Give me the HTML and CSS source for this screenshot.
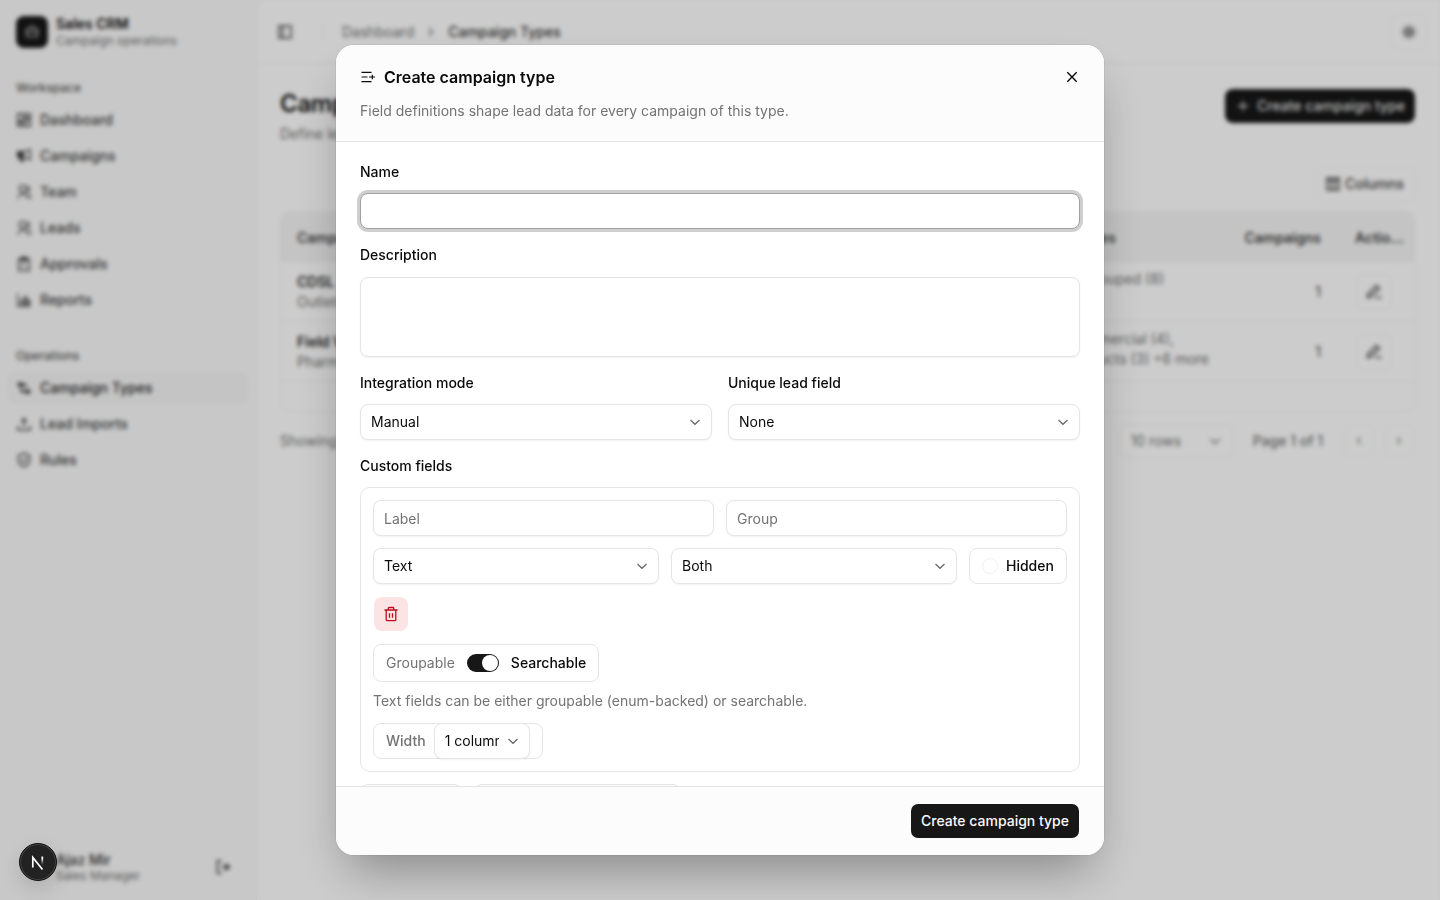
FILE: index.html
```html
<!DOCTYPE html>
<html lang="en">
<head>
<meta charset="utf-8">
<title>Campaign Types</title>
<link rel="stylesheet" href="styles.css">
</head>
<body>
<svg class="defs" width="0" height="0">
  <symbol id="down" viewBox="0 0 16 16"><path d="M3.500 6L8 10.300 12.500 6" fill="none" stroke="currentColor" stroke-width="1.200"/></symbol>
  <symbol id="user" viewBox="0 0 24 24"><path d="M2 22a8 8 0 1 1 16 0h-2a6 6 0 0 0-12 0zm8-9a6 6 0 1 1 0-12 6 6 0 0 1 0 12zm0-2a4 4 0 1 0 0-8 4 4 0 0 0 0 8zm8.3 3.7A8 8 0 0 1 23 22h-2a6 6 0 0 0-3.5-5.5zM17.6 2.4a5.5 5.5 0 0 1-2.1 10.600v-2a3.500 3.500 0 0 0 1.200-6.700z"/></symbol>
  <symbol id="pencil" viewBox="0 0 16 16"><path d="M1.500 13.500l.8-3.500 8.200-8.300 2.800 2.800-8.300 8.300zM9.500 13.500h6" fill="none" stroke="currentColor" stroke-width="1.700"/></symbol>
</svg>
<div class="app">
  <aside class="sidebar">
    <div class="brand">
      <span class="logo"><svg viewBox="0 0 16 16"><path d="M5 5a3 3 0 0 1 6 0M2 5.500h12l-1 7.500H3zM2.500 9h11" fill="none" stroke="currentColor" stroke-width="1.200"/></svg></span>
      <div><div class="brand-name">Sales CRM</div><div class="brand-sub">Campaign operations</div></div>
    </div>
    <div class="nav-label">Workspace</div>
    <nav>
      <a><svg viewBox="0 0 16 16"><path d="M1.700 1.700h5v7h-5zM9.300 1.700h5v4h-5zM9.300 7.700h5v6.600h-5zM1.700 10.700h5v3.600h-5z" fill="none" stroke="currentColor" stroke-width="1.400"/></svg>Dashboard</a>
      <a><svg viewBox="0 0 16 16"><path d="M1 3h7v7H7l1 4H4.500L3.300 10H1z"/><path d="M8 3.700q3 0 6-2v10q-3-2-6-2" fill="none" stroke="currentColor" stroke-width="1.400"/></svg>Campaigns</a>
      <a><svg><use href="#user"/></svg>Team</a>
      <a><svg><use href="#user"/></svg>Leads</a>
      <a><svg viewBox="0 0 16 16"><path d="M2.700 3h10.600v11.500H2.700zM5.500 1.500h5v3h-5zM5.500 9h4" fill="none" stroke="currentColor" stroke-width="1.400"/></svg>Approvals</a>
      <a><svg viewBox="0 0 16 16"><path d="M1.700 1.500v12.800h13M4.700 8v4.500h2V8zM8.500 4.500v8h2v-8zM12 8v4.500h1.500V8z" fill="none" stroke="currentColor" stroke-width="1.200"/></svg>Reports</a>
    </nav>
    <div class="nav-label second">Operations</div>
    <nav>
      <a class="active"><svg viewBox="0 0 16 16"><path d="M1 4.500L5 1v2.800h5.500v2.500H5V8zM15 11.500L11 15v-2.500H7q-3 0-3-3.500h2q0 1.500 1.500 1.500H11V8z"/></svg>Campaign Types</a>
      <a><svg viewBox="0 0 16 16"><path d="M1.700 10v3.700h12.600V10M8 10.500V4" fill="none" stroke="currentColor" stroke-width="1.400"/><path d="M4.500 5.500L8 1.500l3.500 4z"/></svg>Lead Imports</a>
      <a><svg viewBox="0 0 16 16"><path d="M8 1.500l5.500 2v6q0 3-5.500 5.300Q2.500 12.500 2.500 9.500v-6zM5.300 7.700L7.500 10 11 6.300" fill="none" stroke="currentColor" stroke-width="1.400"/></svg>Rules</a>
    </nav>
    <div class="account">
      <div><div class="acc-name">Ajaz Mir</div><div class="acc-role">Sales Manager</div></div>
      <svg viewBox="0 0 16 16"><path d="M6.500 1.700h-4v12.600h4M6.500 8h6" fill="none" stroke="currentColor" stroke-width="1.500"/><path d="M10.500 4l5 4-5 4z"/></svg>
    </div>
  </aside>
  <main class="main">
    <header class="topbar">
      <svg class="panel-icon" viewBox="0 0 16 16"><path d="M2 2h12v12H2zM5.700 2v12" fill="none" stroke="currentColor" stroke-width="1.500"/></svg>
      <span class="divider"></span>
      <span class="crumb">Dashboard</span>
      <svg class="crumb-sep" viewBox="0 0 24 24"><path d="M13.170 12L8.220 7.050l1.410-1.410L16 12l-6.370 6.360-1.410-1.410z"/></svg>
      <span class="crumb here">Campaign Types</span>
      <span class="theme"><svg viewBox="0 0 24 24"><path d="M12 6a6 6 0 1 1 0 12 6 6 0 0 1 0-12zm0 3a3 3 0 1 0 0 6 3 3 0 0 0 0-6z"/><path d="M11 1h2v4h-2zM11 19h2v4h-2zM1 11h4v2H1zM19 11h4v2h-4zM3.500 5L5 3.500 7.500 6 6 7.500zM16.500 18l1.500-1.500 2.500 2.500-1.500 1.500zM19 3.500L20.500 5 18 7.500 16.500 6zM6 16.500L7.500 18 5 20.500 3.500 19z"/></svg></span>
    </header>
    <section class="content">
      <div class="page-head">
        <div><h1>Campaign Types</h1><p>Define lead data</p></div>
        <span class="primary"><svg viewBox="0 0 24 24"><path d="M11 11V4h2v7h7v2h-7v7h-2v-7H4v-2z"/></svg>Create campaign type</span>
      </div>
      <div class="tools"><span class="columns"><svg viewBox="0 0 16 16"><path d="M2 2h12v12H2zM2 4.500h12M6 4v10M10 4v10" fill="none" stroke="currentColor" stroke-width="1.400"/></svg>Columns</span></div>
      <div class="table">
        <div class="row head"><span>Campaign</span><span class="attr h">Attributes</span><span class="num">Campaigns</span><span class="act">Actio...</span></div>
        <div class="row"><div><b>CDSL</b><p>Outlets</p></div><div class="attr a">Ungrouped (8)<br>&nbsp;</div><span class="num">1</span><span class="act"><i class="edit"><svg><use href="#pencil"/></svg></i></span></div>
        <div class="row"><div><b>Field Visit</b><p>Pharma</p></div><div class="attr b"><span class="in">Commercial (4),</span><br>Products (3) +6 more</div><span class="num">1</span><span class="act"><i class="edit"><svg><use href="#pencil"/></svg></i></span></div>
        <div class="filler"></div>
      </div>
      <div class="pager">
        <span>Showing</span>
        <span class="rows">10 rows<svg><use href="#down"/></svg></span>
        <span class="page">Page 1 of 1</span>
        <span class="step">‹</span><span class="step">›</span>
      </div>
    </section>
  </main>
</div>
<div class="overlay">
  <div class="modal" role="dialog">
    <header class="modal-head">
      <div class="title-row">
        <svg class="title-icon" viewBox="0 0 16 16"><path d="M1.500 3.300h10M1.500 8h6M1.500 12.700h10M9 8h6M12.300 5.700v4.600"/></svg>
        <h2>Create campaign type</h2>
        <svg class="close" viewBox="0 0 16 16"><path d="M3.300 3.300l9.400 9.400M12.700 3.300l-9.400 9.400"/></svg>
      </div>
      <p>Field definitions shape lead data for every campaign of this type.</p>
    </header>
    <div class="modal-body">
      <div class="field"><label>Name</label><div class="control focus"></div></div>
      <div class="field desc"><label>Description</label><div class="control area"></div></div>
      <div class="pair">
        <div class="field"><label>Integration mode</label><div class="control">Manual<svg><use href="#down"/></svg></div></div>
        <div class="field"><label>Unique lead field</label><div class="control">None<svg><use href="#down"/></svg></div></div>
      </div>
      <div class="field">
        <label>Custom fields</label>
        <div class="card">
          <div class="two"><div class="control hint">Label</div><div class="control hint">Group</div></div>
          <div class="three">
            <div class="control">Text<svg><use href="#down"/></svg></div>
            <div class="control">Both<svg><use href="#down"/></svg></div>
            <div class="pill hidden-opt"><span class="dot"></span>Hidden</div>
          </div>
          <span class="delete"><svg viewBox="0 0 16 16"><path d="M1.500 4h13M3.200 4v9.700q0 1 1 1h7.600q1 0 1-1V4M5.300 4V2.300q0-.8.8-.8h3.800q.8 0 .8.8V4M6.500 7.200v4.600M9.500 7.200v4.600"/></svg></span>
          <div class="pill mode"><span class="muted">Groupable</span><span class="switch"></span><span>Searchable</span></div>
          <p class="note">Text fields can be either groupable (enum-backed) or searchable.</p>
          <div class="pill width"><span>Width</span><div class="control"><span class="clip">1 column</span><svg><use href="#down"/></svg></div></div>
        </div>
      </div>
      <div class="more"><span class="ghost g1"></span><span class="ghost g2"></span></div>
    </div>
    <footer class="modal-foot"><button>Create campaign type</button></footer>
  </div>
</div>
<div class="badge"><svg viewBox="0 0 36 36"><defs><linearGradient id="fade" gradientUnits="userSpaceOnUse" x1="0" y1="12" x2="0" y2="20"><stop offset=".3" stop-color="#fff"/><stop offset="1" stop-color="#fff" stop-opacity=".1"/></linearGradient></defs><path d="M12.800 23.500V13.500L22.500 25.500"/><path d="M22.300 12.500v8" stroke="url(#fade)"/></svg></div>
</body>
</html>
```

FILE: styles.css
```css
* { box-sizing: border-box; }
body { margin: 0; width: 1440px; height: 900px; overflow: hidden; font: 14px/20px Inter, sans-serif; color: #0a0a0a; background: #fafafa; }
h1, h2, p { margin: 0; }
svg { fill: currentColor; flex: none; width: 16px; height: 16px; }
.defs { position: absolute; }

.app { display: flex; height: 900px; }
.sidebar { width: 256px; padding: 16px 8px 0; display: flex; flex-direction: column; background: #fafafa; }
.brand { display: flex; gap: 8px; padding-left: 8px; height: 32px; }
.logo { width: 32px; height: 32px; border-radius: 8px; background: #171717; color: #ccc; display: grid; place-items: center; }
.brand-name { font-weight: 600; line-height: 16px; }
.brand-sub { font-size: 12px; line-height: 18px; color: #737373; }
.nav-label { margin-top: 24px; padding-left: 8px; height: 32px; font-size: 12px; line-height: 32px; font-weight: 500; color: #555; }
.nav-label.second { margin-top: 24px; }
nav { display: flex; flex-direction: column; gap: 4px; }
nav a { display: flex; align-items: center; gap: 8px; height: 32px; padding-left: 8px; border-radius: 8px; font-weight: 500; color: #404040; }
nav a.active { background: #f6f6f6; width: 240px; color: #262626; }
.account { margin-top: auto; height: 50px; margin-bottom: 8px; padding: 0 17px 0 48px; display: flex; justify-content: space-between; align-items: center; color: #333; }
.account > div { padding-top: 2px; }
.acc-name { font-weight: 500; line-height: 16px; }
.acc-role { font-size: 12px; line-height: 16px; color: #737373; }

.main { flex: 1; margin: 1px 1px 0 0; background: #fff; border-left: 1px solid #f3f3f3; border-radius: 8px 0 0 0; }
.topbar { height: 63px; display: flex; align-items: center; padding: 0 12px 0 20px; border-bottom: 1px solid #f3f3f3; }
.panel-icon { color: #404040; }
.divider { width: 1px; height: 16px; margin: 0 18px 0 30px; background: #f3f3f3; }
.crumb { color: #737373; }
.crumb-sep { margin: 0 9px; color: #737373; }
.crumb.here { color: #333; font-weight: 500; }
.theme { width: 36px; height: 36px; margin-left: auto; border: 1px solid #f6f6f6; border-radius: 8px; display: grid; place-items: center; color: #444; }
.content { padding: 24px 24px 0 23px; }
.page-head { display: flex; justify-content: space-between; height: 62px; }
.page-head h1 { font-size: 24px; line-height: 31px; font-weight: 600; letter-spacing: -.3px; }
.page-head p { margin-top: 5px; color: #737373; }
.primary { display: flex; align-items: center; gap: 6px; width: 190px; height: 34px; margin-top: 1px; padding-left: 10px; border-radius: 8px; background: #171717; color: #e8e8e8; font-weight: 500; }
.tools { display: flex; justify-content: flex-end; margin-top: 16px; }
.columns { display: flex; align-items: center; gap: 4px; width: 100px; height: 36px; padding-left: 9px; border: 1px solid #f8f8f8; border-radius: 8px; font-weight: 500; color: #404040; }
.table { margin-top: 9px; border: 1px solid #f4f4f4; border-radius: 10px; overflow: hidden; color: #444; }
.row { display: grid; grid-template-columns: 700px 1fr 111px 93px; height: 60px; align-items: center; padding-left: 16px; border-bottom: 1px solid #f3f3f3; }
.row.head { height: 50px; padding-top: 3px; background: #f5f5f5; font-weight: 600; }
.row b { font-weight: 600; color: #262626; }
.row p { color: #737373; }
.attr { text-align: right; color: #737373; white-space: nowrap; padding-bottom: 5px; }
.attr.h { padding: 0 94px 0 0; color: #444; }
.attr.a { padding-right: 46px; }
.attr.b { padding-right: 1px; }
.in { margin-right: 35px; }
.num { text-align: right; }
.act { padding-left: 34px; white-space: nowrap; }
.edit { display: grid; place-items: center; width: 36px; height: 36px; margin-left: 1px; border: 1px solid #f4f4f4; border-radius: 8px; }
.filler { height: 29px; }
.pager { display: flex; align-items: center; margin-top: 11px; height: 36px; color: #737373; }
.rows { margin-left: auto; width: 114px; height: 34px; padding: 0 9px 0 11px; border: 1px solid #f4f4f4; border-radius: 8px; display: flex; align-items: center; justify-content: space-between; }
.page { margin: 0 20px; font-weight: 500; }
.step { width: 32px; height: 32px; margin-left: 0; border: 1px solid #fafafa; border-radius: 8px; text-align: center; line-height: 28px; }
.step + .step { margin-left: 8px; }

.overlay { position: fixed; inset: 0; display: grid; place-items: center; background: rgba(0,0,0,.2); backdrop-filter: blur(2px); }
.modal { width: 768px; height: 810px; display: flex; flex-direction: column; border-radius: 18px; overflow: hidden; background: #fff; box-shadow: 0 0 0 1px rgba(0,0,0,.05), 0 25px 50px -12px rgba(0,0,0,.35); }
.modal-head { height: 97px; padding: 20px 24px 0; background: #fcfcfc; border-bottom: 1px solid #e5e5e5; }
.title-row { display: flex; align-items: center; gap: 8px; height: 24px; }
.title-row h2 { font-size: 16px; line-height: 24px; font-weight: 600; }
.title-icon { fill: none; stroke: currentColor; stroke-width: 1.2; }
.close { margin-left: auto; fill: none; stroke: currentColor; stroke-width: 1.4; }
.modal-head p { margin-top: 12px; line-height: 20px; color: #737373; }
.modal-body { flex: 1; min-height: 0; overflow: hidden; padding: 20px 24px 0; display: flex; flex-direction: column; gap: 16px; }
.field { display: flex; flex-direction: column; gap: 11px; flex: none; }
.field.desc { gap: 12px; }
label { height: 20px; font-weight: 500; }
.control { display: flex; align-items: center; justify-content: space-between; height: 36px; padding: 0 8px 0 10px; border: 1px solid #e5e5e5; border-radius: 8px; background: #fff; box-shadow: 0 1px 2px rgba(0,0,0,.05); }
.control svg { color: #666; }
.control.focus { border-color: #a1a1a1; box-shadow: 0 0 0 3px #cfcfcf; }
.control.area { height: 80px; }
.control.hint { color: #737373; padding-top: 2px; }
.pair { display: grid; grid-template-columns: 1fr 1fr; gap: 16px; }
.card { height: 285px; padding: 12px; border: 1px solid #e5e5e5; border-radius: 10px; display: flex; flex-direction: column; align-items: flex-start; }
.two { width: 100%; display: grid; grid-template-columns: 1fr 1fr; gap: 12px; }
.three { width: 100%; margin-top: 12px; display: grid; grid-template-columns: 1fr 1fr 98px; gap: 12px; }
.pill { display: flex; align-items: center; height: 36px; border: 1px solid #e5e5e5; border-radius: 8px; font-weight: 500; }
.hidden-opt { padding-left: 12px; gap: 8px; }
.dot { width: 16px; height: 16px; border-radius: 50%; border: 1px solid #f2f2f2; }
.delete { width: 34px; height: 34px; margin: 13px 1px; border-radius: 8px; display: grid; place-items: center; background: #fce4e4; color: #c10b1e; }
.delete svg { fill: none; stroke: currentColor; stroke-width: 1.3; }
.mode { height: 38px; width: 226px; padding-left: 12px; gap: 12px; }
.mode .muted { color: #737373; font-weight: 400; }
.switch { width: 32px; height: 18px; padding: 1px; border-radius: 9px; background: #171717; display: flex; justify-content: flex-end; }
.switch::after { content: ""; width: 16px; height: 16px; border-radius: 50%; background: #fff; }
.note { margin: 9px 0 12px; color: #737373; }
.width { width: 170px; padding-left: 12px; color: #737373; }
.width .control { width: 96px; margin-left: 8px; flex: none; color: #0a0a0a; font-weight: 400; }
.clip { width: 54px; overflow: hidden; white-space: nowrap; }
.more { display: flex; gap: 12px; margin-top: -4px; flex: none; }
.ghost { height: 36px; border: 1px solid #e5e5e5; border-radius: 8px; }
.g1 { width: 102px; }
.g2 { width: 207px; }
.modal-foot { height: 69px; flex: none; padding: 17px 25px 0; display: flex; justify-content: flex-end; align-items: flex-start; background: #fcfcfc; border-top: 1px solid #e5e5e5; }
.modal-foot button { width: 168px; height: 34px; padding: 0; border: 0; border-radius: 7px; background: #171717; color: #fafafa; font: 500 14px/20px Inter, sans-serif; white-space: nowrap; }

.badge { position: fixed; left: 19px; top: 843px; width: 38px; height: 38px; border-radius: 50%; background: #222; border: 1px solid #111; box-shadow: inset 0 0 0 1px #444, 0 8px 20px rgba(0,0,0,.12); }
.badge svg { display: block; width: 36px; height: 36px; fill: none; stroke: #fff; stroke-width: 1.7; }
```
